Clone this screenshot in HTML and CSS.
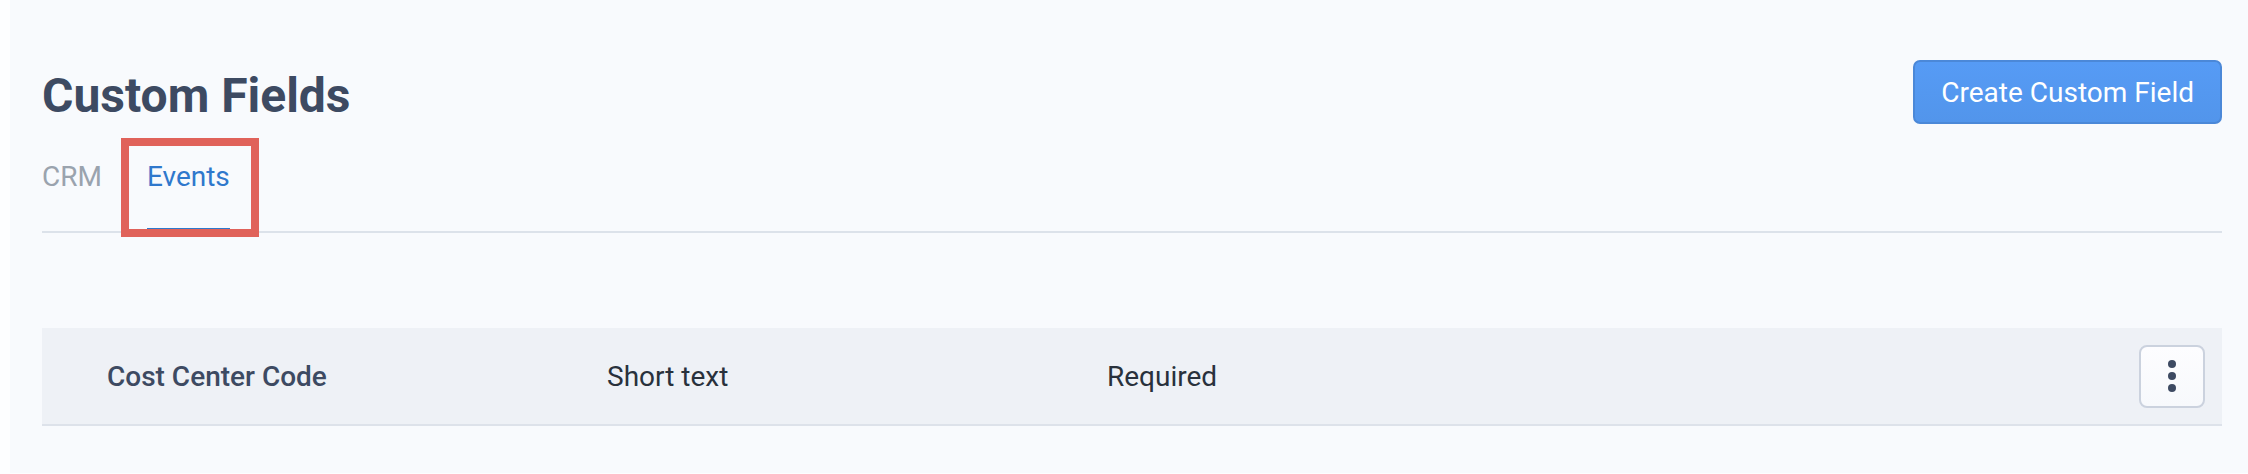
FILE: index.html
```html
<!DOCTYPE html>
<html lang="en">
<head>
<meta charset="utf-8">
<title>Custom Fields</title>
<link rel="stylesheet" href="styles.css">
</head>
<body>
<div class="page">
  <header class="header">
    <h1 class="title">Custom Fields</h1>
    <button class="btn-primary" type="button">Create Custom Field</button>
  </header>
  <nav class="tabs">
    <a class="tab">CRM</a>
    <a class="tab tab-active">Events<span class="highlight"></span></a>
  </nav>
  <div class="list">
    <div class="row">
      <div class="cell cell-name">Cost Center Code</div>
      <div class="cell">Short text</div>
      <div class="cell">Required</div>
      <div class="cell-actions">
        <button class="kebab" type="button" aria-label="More actions">
          <svg width="10" height="34" viewBox="0 0 10 34" aria-hidden="true">
            <circle cx="5" cy="5" r="4"/>
            <circle cx="5" cy="17" r="4"/>
            <circle cx="5" cy="29" r="4"/>
          </svg>
        </button>
      </div>
    </div>
  </div>
</div>
</body>
</html>
```
FILE: styles.css
```css
* { box-sizing: border-box; }

html, body {
  margin: 0;
  padding: 0;
  background: #fdfeff;
}

body {
  font-family: Roboto, "Liberation Sans", Arial, sans-serif;
  color: #3d4a62;
}

.page {
  margin-left: 10px;
  height: 473px;
  background: #f8fafd;
  padding: 60px 26px 0 32px;
}

.header {
  display: flex;
  justify-content: space-between;
  align-items: flex-start;
}

.title {
  margin: 8px 0 0 0;
  font-size: 48px;
  line-height: 56px;
  font-weight: 700;
  color: #3d4a62;
}

.btn-primary {
  height: 64px;
  padding: 0 26px;
  font-family: inherit;
  font-size: 28px;
  color: #ffffff;
  background: linear-gradient(#569bf5, #5295eb);
  border: 2px solid #4b88d8;
  border-radius: 7px;
}

.tabs {
  display: flex;
  gap: 45px;
  margin-top: 35px;
  border-bottom: 2px solid #dce2ea;
}

.tab {
  position: relative;
  font-size: 28px;
  line-height: 36px;
  padding-bottom: 33px;
  border-bottom: 3px solid transparent;
  color: #9aa3ae;
}

.tab-active {
  color: #2f78cc;
  border-bottom-color: #2f78cc;
}

.highlight {
  position: absolute;
  left: -26px;
  top: -21px;
  right: -29px;
  bottom: -9px;
  border: 8px solid #e0625a;
}

.list {
  margin-top: 95px;
}

.row {
  display: grid;
  grid-template-columns: 500px 500px 1fr auto;
  align-items: center;
  height: 98px;
  padding: 0 17px 0 65px;
  background: #eef1f6;
  border-bottom: 2px solid #dde2ea;
}

.cell {
  font-size: 28px;
  color: #29313c;
}

.cell-name {
  font-weight: 500;
  color: #3d4a62;
}

.kebab {
  display: flex;
  align-items: center;
  justify-content: center;
  width: 66px;
  height: 63px;
  padding: 0;
  background: linear-gradient(#fdfdff, #f7f9fc);
  border: 2px solid #cbd2de;
  border-radius: 8px;
}

.kebab svg { fill: #3d4a62; }
```
